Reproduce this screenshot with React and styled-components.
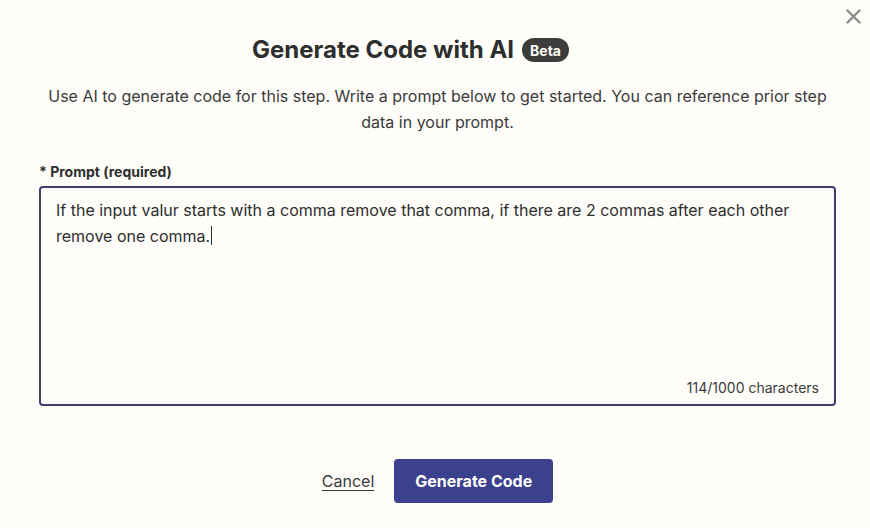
import React from "react";
import styled, { createGlobalStyle } from "styled-components";

const GlobalStyle = createGlobalStyle`
  html, body {
    margin: 0;
    padding: 0;
    background: #fffdf9;
  }
  body {
    font-family: Inter, "Noto Sans", sans-serif;
    color: #2d2e2e;
  }
`;

/* MODAL */
const Modal = styled.div`
  position: relative;
  width: 870px;
  height: 528px;
  box-sizing: border-box;
  padding: 34px 34px 0 39px;
  background: #fffdf9;
`;

const CloseButton = styled.button`
  position: absolute;
  top: 8px;
  right: 8px;
  width: 17px;
  height: 17px;
  padding: 0;
  border: none;
  background: none;
  cursor: pointer;
  display: flex;
  align-items: center;
  justify-content: center;
`;

const Header = styled.div`
  display: flex;
  align-items: center;
  justify-content: center;
  gap: 8px;
  padding-right: 54px;
`;

const Title = styled.h1`
  margin: 0;
  font-size: 24px;
  font-weight: 700;
  line-height: 32px;
  color: #2d2e2e;
`;

const Badge = styled.span`
  display: inline-flex;
  align-items: center;
  height: 24px;
  padding: 0 8px;
  border-radius: 12px;
  background: #3d3c3a;
  color: #fffdf9;
  font-size: 14px;
  font-weight: 700;
`;

const Description = styled.p`
  margin: 17px 0 0;
  padding: 0 6px;
  text-align: center;
  font-size: 16px;
  line-height: 26px;
  color: #3a3b3b;
`;

const Label = styled.label`
  display: block;
  margin-top: 27px;
  font-size: 14px;
  font-weight: 700;
  line-height: 20px;
  color: #2d2e2e;
`;

const Field = styled.div`
  margin-top: 4px;
  height: 220px;
  box-sizing: border-box;
  border: 2px solid #3d3f6b;
  border-radius: 4px;
  padding: 9px 15px 6px 15px;
  display: flex;
  flex-direction: column;
  justify-content: space-between;
  background: #fffdf9;
`;

const PromptText = styled.div`
  font-size: 16px;
  line-height: 26px;
  color: #2d2e2e;
`;

const Caret = styled.span`
  display: inline-block;
  width: 1px;
  height: 19px;
  margin-left: 1px;
  vertical-align: -3px;
  background: #2d2e2e;
`;

const Counter = styled.div`
  text-align: right;
  font-size: 14px;
  line-height: 20px;
  color: #3a3b3b;
`;

const Actions = styled.div`
  display: flex;
  align-items: center;
  justify-content: center;
  gap: 20px;
  margin-top: 53px;
`;

const CancelLink = styled.a`
  font-size: 16px;
  color: #3a3b3b;
  text-decoration: underline;
  text-underline-offset: 3px;
  cursor: pointer;
`;

const PrimaryButton = styled.button`
  height: 44px;
  padding: 0 21px;
  border: none;
  border-radius: 4px;
  background: #3c418e;
  color: #fffdf9;
  font-family: Inter, "Noto Sans", sans-serif;
  font-size: 16px;
  font-weight: 700;
  cursor: pointer;
`;

export default function App() {
  return (
    <>
      <GlobalStyle />
      <Modal>
        <CloseButton aria-label="Close">
          <svg width="15" height="15" viewBox="0 0 15 15">
            <path
              d="M1.5 1.5 L13.5 13.5 M13.5 1.5 L1.5 13.5"
              stroke="#8b8b8b"
              strokeWidth="2.4"
              strokeLinecap="round"
            />
          </svg>
        </CloseButton>

        <Header>
          <Title>Generate Code with AI</Title>
          <Badge>Beta</Badge>
        </Header>

        <Description>
          Use AI to generate code for this step. Write a prompt below to get
          started. You can reference prior step data in your prompt.
        </Description>

        <Label>* Prompt (required)</Label>
        <Field>
          <PromptText>
            If the input valur starts with a comma remove that comma, if there
            are 2 commas after each other remove one comma.
            <Caret />
          </PromptText>
          <Counter>114/1000 characters</Counter>
        </Field>

        <Actions>
          <CancelLink>Cancel</CancelLink>
          <PrimaryButton>Generate Code</PrimaryButton>
        </Actions>
      </Modal>
    </>
  );
}
